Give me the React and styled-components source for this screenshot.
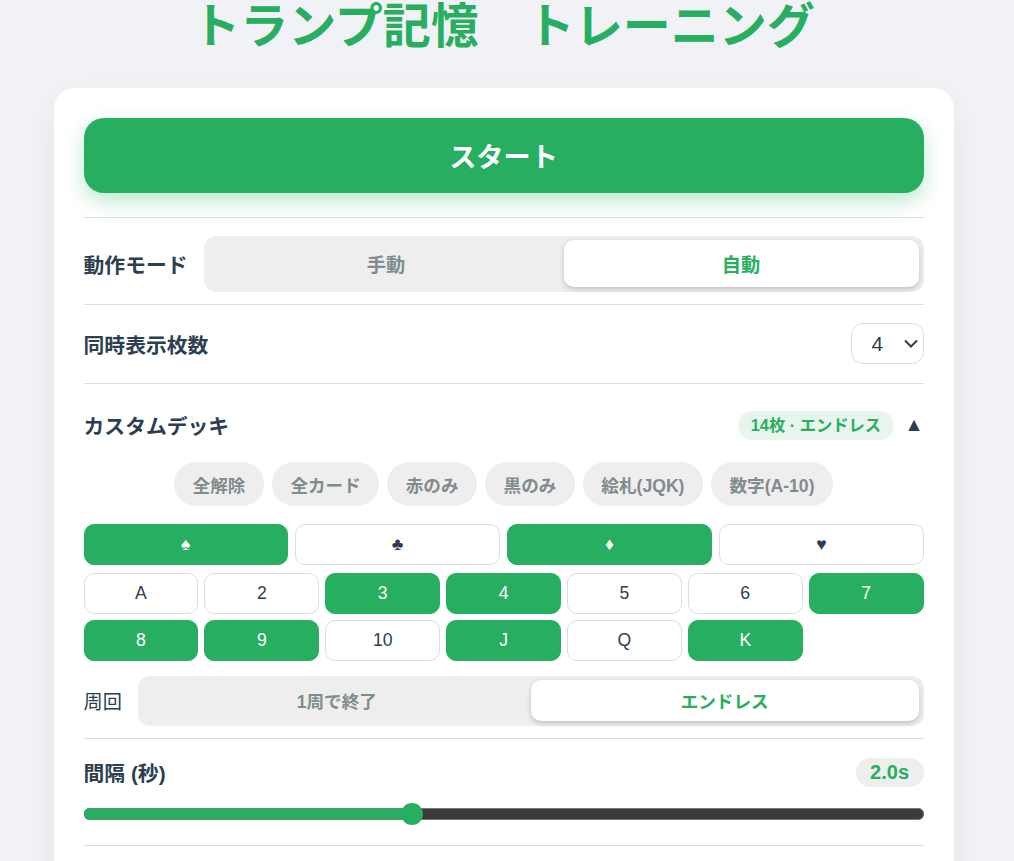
import React from "react";
import styled, { createGlobalStyle } from "styled-components";

const GlobalStyle = createGlobalStyle`
    html, body {
        margin: 0;
        padding: 0;
        height: 100%;
        overflow: hidden;
    }
    body {
        background-color: #f0f2f5;
        color: #2c3e50;
        font-family: "Liberation Sans", "Noto Sans CJK JP", sans-serif;
    }
    * {
        box-sizing: border-box;
    }
`;

const Page = styled.div`
    width: 1007.1px;
    display: flex;
    flex-direction: column;
    align-items: center;
`;

const Title = styled.h1`
    margin: 0 0 32px;
    height: 56px;
    line-height: 54px;
    font-size: 48px;
    font-weight: 700;
    color: #27ae60;
    white-space: pre;
`;

const Card = styled.main`
    width: 900px;
    padding: 30px;
    background-color: #fff;
    border-radius: 20px;
    box-shadow: 0 10px 30px rgba(0, 0, 0, 0.05);
`;

const StartButton = styled.button`
    display: block;
    width: 100%;
    height: 75px;
    margin-bottom: 24px;
    padding-bottom: 2px;
    border: 0;
    border-radius: 20px;
    background-color: #27ae60;
    color: #fff;
    font-family: inherit;
    font-size: 27.2px;
    font-weight: 700;
    box-shadow: 0 8px 20px rgba(39, 174, 96, 0.3);
`;

const Section = styled.section`
    border-top: 1px solid #ddd;
    padding: ${(props) => props.$padding};
`;

const Row = styled.div`
    display: flex;
    align-items: center;
    justify-content: space-between;
    gap: 16px;
`;

const Label = styled.span`
    font-size: 20.8px;
    font-weight: 700;
    white-space: nowrap;
`;

const Segmented = styled.div`
    flex: 1;
    display: flex;
    height: ${(props) => props.$height}px;
    padding: 4px 5px 5px 5px;
    border-radius: 12px;
    background-color: #eee;
`;

const SegmentButton = styled.button`
    flex: 1;
    border: 0;
    border-radius: 10px;
    background-color: ${(props) => (props.$active ? "#fff" : "transparent")};
    color: ${(props) => (props.$active ? "#27ae60" : "#7f8c8d")};
    font-family: inherit;
    font-size: ${(props) => props.$size}px;
    font-weight: 700;
    box-shadow: ${(props) =>
        props.$active ? "0 2px 5px rgba(0, 0, 0, 0.2)" : "none"};
`;

const SelectWrap = styled.div`
    position: relative;
    width: 73px;
    height: 41px;
`;

const CountSelect = styled.select`
    appearance: none;
    width: 100%;
    height: 100%;
    padding: 0 0 0 20px;
    border: 1px solid #ddd;
    border-radius: 12px;
    background-color: #fff;
    color: #2c3e50;
    font-family: inherit;
    font-size: 20.8px;
`;

const Chevron = styled.svg`
    position: absolute;
    top: 16px;
    right: 6px;
    width: 14px;
    height: 9px;
    pointer-events: none;
`;

const DeckRight = styled.div`
    display: flex;
    align-items: center;
    gap: 11px;
`;

const DeckBadge = styled.span`
    height: 29px;
    line-height: 29px;
    padding: 0 12.5px;
    border-radius: 15px;
    background-color: #e8f5ec;
    color: #27ae60;
    font-size: 16.3px;
    font-weight: 700;
`;

const Caret = styled.span`
    font-size: 19.2px;
    line-height: 1;
`;

const Filters = styled.div`
    display: flex;
    justify-content: center;
    gap: 8px;
    margin: 22px 0 18px;
`;

const FilterPill = styled.button`
    height: 44px;
    padding: 0 18.5px;
    border: 0;
    border-radius: 22px;
    background-color: #eee;
    color: #7f8c8d;
    font-family: inherit;
    font-size: 17.6px;
    font-weight: 700;
`;

const CardGrid = styled.div`
    display: grid;
    grid-template-columns: repeat(${(props) => props.$cols}, 1fr);
    gap: ${(props) => props.$gap}px;
    margin-bottom: ${(props) => props.$bottom}px;
`;

const Toggle = styled.button`
    height: 41px;
    padding: 0;
    border: 1px solid ${(props) => (props.$on ? "#27ae60" : "#ddd")};
    border-radius: 10px;
    background-color: ${(props) => (props.$on ? "#27ae60" : "#fff")};
    color: ${(props) => (props.$on ? "#fff" : "#2c3e50")};
    font-family: inherit;
    font-size: 17.6px;
`;

const LoopLabel = styled.span`
    font-size: 19.2px;
    white-space: nowrap;
`;

const ValuePill = styled.span`
    height: 29px;
    line-height: 29px;
    padding: 0 14.5px;
    border-radius: 15px;
    background-color: #eee;
    color: #27ae60;
    font-size: 20px;
    font-weight: 700;
`;

const Track = styled.div`
    position: relative;
    height: 12px;
    margin-top: 21px;
    border-radius: 6px;
    background-color: #3a3a3a;
    box-shadow: inset 0 0 0 1px #777;
`;

const TrackFill = styled.div`
    height: 100%;
    border-radius: 6px 0 0 6px;
    background-color: #27ae60;
    box-shadow: inset 0 0 0 1px #4a9a6c;
`;

const Thumb = styled.div`
    position: absolute;
    top: -5px;
    width: 22px;
    height: 22px;
    margin-left: -11px;
    border-radius: 50%;
    background-color: #27ae60;
`;

const SUITS = [
    { mark: "♠", on: true },
    { mark: "♣", on: false },
    { mark: "♦", on: true },
    { mark: "♥", on: false },
];
const RANKS = ["A", "2", "3", "4", "5", "6", "7", "8", "9", "10", "J", "Q", "K"];
const ACTIVE_RANKS = ["3", "4", "7", "8", "9", "J", "K"];
const FILTERS = ["全解除", "全カード", "赤のみ", "黒のみ", "絵札(JQK)", "数字(A-10)"];

function App() {
    const interval = 39.05;
    return (
        <Page>
            <GlobalStyle />
            <Title>トランプ記憶　トレーニング</Title>
            <Card>
                <StartButton>スタート</StartButton>
                <Section $padding="18px 0 12px">
                    <Row>
                        <Label>動作モード</Label>
                        <Segmented $height={56}>
                            <SegmentButton $size={19.2}>手動</SegmentButton>
                            <SegmentButton $size={19.2} $active>
                                自動
                            </SegmentButton>
                        </Segmented>
                    </Row>
                </Section>
                <Section $padding="18px 0 19px">
                    <Row>
                        <Label>同時表示枚数</Label>
                        <SelectWrap>
                            <CountSelect defaultValue="4">
                                <option>2</option>
                                <option>3</option>
                                <option>4</option>
                                <option>5</option>
                            </CountSelect>
                            <Chevron viewBox="0 0 14 9">
                                <path
                                    d="M1 1.5 L7 7.5 L13 1.5"
                                    fill="none"
                                    stroke="#2c3e50"
                                    strokeWidth="2"
                                />
                            </Chevron>
                        </SelectWrap>
                    </Row>
                </Section>
                <Section $padding="26px 0 12px">
                    <Row>
                        <Label>カスタムデッキ</Label>
                        <DeckRight>
                            <DeckBadge>14枚 · エンドレス</DeckBadge>
                            <Caret>▲</Caret>
                        </DeckRight>
                    </Row>
                    <Filters>
                        {FILTERS.map((name) => (
                            <FilterPill key={name}>{name}</FilterPill>
                        ))}
                    </Filters>
                    <CardGrid $cols={4} $gap={7.5} $bottom={8}>
                        {SUITS.map((suit) => (
                            <Toggle key={suit.mark} $on={suit.on}>
                                {suit.mark}
                            </Toggle>
                        ))}
                    </CardGrid>
                    <CardGrid $cols={7} $gap={6} $bottom={15}>
                        {RANKS.map((rank) => (
                            <Toggle key={rank} $on={ACTIVE_RANKS.includes(rank)}>
                                {rank}
                            </Toggle>
                        ))}
                    </CardGrid>
                    <Row>
                        <LoopLabel>周回</LoopLabel>
                        <Segmented $height={50}>
                            <SegmentButton $size={17.6}>1周で終了</SegmentButton>
                            <SegmentButton $size={17.6} $active>
                                エンドレス
                            </SegmentButton>
                        </Segmented>
                    </Row>
                </Section>
                <Section $padding="18px 0 25px">
                    <Row>
                        <Label>間隔 (秒)</Label>
                        <ValuePill>2.0s</ValuePill>
                    </Row>
                    <Track>
                        <TrackFill style={{ width: `${interval}%` }} />
                        <Thumb style={{ left: `${interval}%` }} />
                    </Track>
                </Section>
                <Section $padding="24px 0" />
            </Card>
        </Page>
    );
}

export default App;
